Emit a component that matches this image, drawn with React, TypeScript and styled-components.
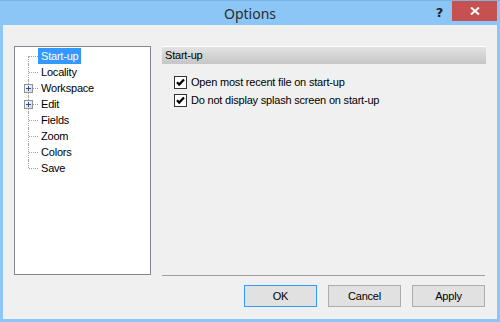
import { createGlobalStyle, styled } from "styled-components";

const GlobalStyle = createGlobalStyle`
  html, body {
    margin: 0;
    padding: 0;
    background: #8bc6f6;
  }
  * {
    box-sizing: border-box;
  }
`;

const treeItems = [
  { label: "Start-up", selected: true },
  { label: "Locality" },
  { label: "Workspace", expandable: true },
  { label: "Edit", expandable: true },
  { label: "Fields" },
  { label: "Zoom" },
  { label: "Colors" },
  { label: "Save" },
];

const options = [
  "Open most recent file on start-up",
  "Do not display splash screen on start-up",
];

const CheckIcon = () => (
  <svg width="13" height="13" viewBox="0 0 13 13">
    <rect x="0.5" y="0.5" width="12" height="12" fill="#fff" stroke="#333" />
    <path d="M3 6.2 L5.2 8.6 L10 3.4" fill="none" stroke="#000" strokeWidth="2.2" />
  </svg>
);

const PlusBox = () => (
  <svg width="9" height="9" viewBox="0 0 9 9">
    <defs>
      <linearGradient id="pb" x1="0" y1="0" x2="1" y2="1">
        <stop offset="0" stopColor="#ffffff" />
        <stop offset="1" stopColor="#d6d6d6" />
      </linearGradient>
    </defs>
    <rect x="0.5" y="0.5" width="8" height="8" fill="url(#pb)" stroke="#919191" />
    <path d="M2 4.5 H7 M4.5 2 V7" stroke="#2e4f9e" strokeWidth="1" />
  </svg>
);

const App = () => {
  return (
    <Window>
      <GlobalStyle />
      <TitleBar>
        <Title>Options</Title>
        <HelpGlyph>?</HelpGlyph>
        <CloseButton>
          <svg width="10" height="8" viewBox="0 0 10 8">
            <path d="M1 0.5 L9 7.5 M9 0.5 L1 7.5" stroke="#fff" strokeWidth="2" />
          </svg>
        </CloseButton>
      </TitleBar>
      <Body>
        <Main>
          <Tree>
            {treeItems.map((item, i) => (
              <TreeRow key={item.label}>
                <Connector $first={i === 0} $last={i === treeItems.length - 1}>
                  {item.expandable && (
                    <Expander>
                      <PlusBox />
                    </Expander>
                  )}
                </Connector>
                <TreeLabel $selected={!!item.selected}>{item.label}</TreeLabel>
              </TreeRow>
            ))}
          </Tree>
          <Page>
            <SectionHeader>Start-up</SectionHeader>
            <OptionList>
              {options.map((o) => (
                <OptionRow key={o}>
                  <CheckIcon />
                  <span>{o}</span>
                </OptionRow>
              ))}
            </OptionList>
            <Separator />
          </Page>
        </Main>
        <ButtonRow>
          <Button $default>OK</Button>
          <Button>Cancel</Button>
          <Button>Apply</Button>
        </ButtonRow>
      </Body>
    </Window>
  );
};

export default App;

const Window = styled.div`
  width: 500px;
  height: 322px;
  display: flex;
  flex-direction: column;
  padding: 0 3px 3px 3px;
  background: #8bc6f6;
  border-top: 1px solid #7db4e0;
  font-family: "Liberation Sans", Arial, sans-serif;
  font-size: 11px;
  letter-spacing: -0.2px;
  color: #000;
`;

const TitleBar = styled.div`
  height: 24px;
  display: flex;
  align-items: flex-start;
  justify-content: center;
  position: relative;
`;

const Title = styled.div`
  font-family: "Noto Sans", "Open Sans", sans-serif;
  font-size: 14px;
  letter-spacing: 0;
  line-height: 26px;
  color: #2b2b2b;
`;

const HelpGlyph = styled.div`
  position: absolute;
  right: 54px;
  top: 5px;
  font-family: "DejaVu Sans", sans-serif;
  font-weight: bold;
  font-size: 13px;
  line-height: 14px;
  color: #222;
`;

const CloseButton = styled.div`
  position: absolute;
  right: 0;
  top: 0;
  width: 45px;
  height: 20px;
  background: #c75050;
  display: flex;
  align-items: center;
  justify-content: center;
`;

const Body = styled.div`
  flex: 1;
  background: #f0f0f0;
  padding: 21px 11px 0 11px;
  display: flex;
  flex-direction: column;
`;

const Main = styled.div`
  display: flex;
  gap: 11px;
  height: 230px;
`;

const Tree = styled.div`
  width: 137px;
  height: 229px;
  background: #fff;
  border: 1px solid #828790;
  padding: 1px 0 0 9px;
`;

const TreeRow = styled.div`
  display: flex;
  align-items: center;
  height: 16px;
`;

const Connector = styled.div<{ $first: boolean; $last: boolean }>`
  position: relative;
  width: 14px;
  height: 16px;
  &::before {
    content: "";
    position: absolute;
    left: 4px;
    top: ${(p) => (p.$first ? "8px" : "0")};
    height: ${(p) => (p.$last || p.$first ? "8px" : "16px")};
    border-left: 1px dotted #a0a0a0;
  }
  &::after {
    content: "";
    position: absolute;
    left: 5px;
    top: 8px;
    width: 9px;
    border-top: 1px dotted #a0a0a0;
  }
`;

const Expander = styled.div`
  position: absolute;
  left: 0;
  top: 4px;
  width: 9px;
  height: 9px;
  z-index: 1;
  display: flex;
`;

const TreeLabel = styled.div<{ $selected: boolean }>`
  height: 16px;
  line-height: 16px;
  padding: 0 2px 0 3px;
  background: ${(p) => (p.$selected ? "#3399ff" : "transparent")};
  color: ${(p) => (p.$selected ? "#fff" : "#000")};
`;

const Page = styled.div`
  flex: 1;
  display: flex;
  flex-direction: column;
`;

const SectionHeader = styled.div`
  height: 18px;
  border-top: 1px solid #fff;
  background: linear-gradient(#e2e2e2, #c6c6c6);
  padding-left: 3px;
  line-height: 16px;
  width: 324px;
`;

const OptionList = styled.div`
  display: flex;
  flex-direction: column;
  gap: 5px;
  padding: 12px 0 0 12px;
`;

const OptionRow = styled.label`
  display: flex;
  align-items: center;
  gap: 4px;
  height: 13px;
  line-height: 13px;
`;

const Separator = styled.div`
  margin-top: auto;
  width: 323px;
  border-top: 1px solid #a0a0a0;
`;

const ButtonRow = styled.div`
  display: flex;
  justify-content: flex-end;
  gap: 11px;
  padding: 9px 1px 0 0;
`;

const Button = styled.div<{ $default?: boolean }>`
  width: 73px;
  height: 22px;
  display: flex;
  align-items: center;
  justify-content: center;
  background: #e1e1e1;
  border: 1px solid ${(p) => (p.$default ? "#3399ff" : "#adadad")};
  font-size: 11px;
`;
